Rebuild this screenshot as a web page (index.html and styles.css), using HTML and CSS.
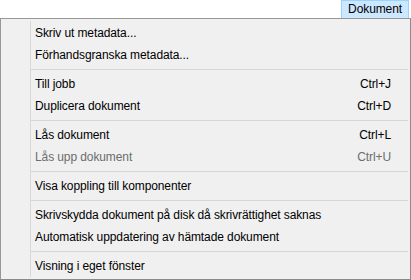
FILE: index.html
```html
<!DOCTYPE html>
<html lang="sv">
<head>
  <meta charset="UTF-8">
  <title>Dokument</title>
  <link rel="stylesheet" href="styles.css">
</head>
<body>
  <div class="menubar">
    <span class="menubar-item open">Dokument</span>
  </div>

  <!-- Dropdown -->
  <div class="menu">
    <div class="menu-item"><span class="label">Skriv ut metadata...</span></div>
    <div class="menu-item"><span class="label">Förhandsgranska metadata...</span></div>
    <div class="menu-sep"></div>
    <div class="menu-item"><span class="label">Till jobb</span><span class="key">Ctrl+J</span></div>
    <div class="menu-item"><span class="label">Duplicera dokument</span><span class="key">Ctrl+D</span></div>
    <div class="menu-sep"></div>
    <div class="menu-item"><span class="label">Lås dokument</span><span class="key">Ctrl+L</span></div>
    <div class="menu-item disabled"><span class="label">Lås upp dokument</span><span class="key">Ctrl+U</span></div>
    <div class="menu-sep"></div>
    <div class="menu-item"><span class="label">Visa koppling till komponenter</span></div>
    <div class="menu-sep"></div>
    <div class="menu-item"><span class="label">Skrivskydda dokument på disk då skrivrättighet saknas</span></div>
    <div class="menu-item"><span class="label">Automatisk uppdatering av hämtade dokument</span></div>
    <div class="menu-sep"></div>
    <div class="menu-item"><span class="label">Visning i eget fönster</span></div>
  </div>
</body>
</html>
```

FILE: styles.css
```css
body {
  margin: 0;
  padding: 0;
  background: #fff;
  font-family: "Liberation Sans", Arial, sans-serif;
  font-size: 12px;
  letter-spacing: -0.1px;
  color: #000;
  width: 411px;
  height: 280px;
  overflow: hidden;
}

.menubar {
  display: flex;
  justify-content: flex-end;
  height: 18px;
  padding-right: 2px;
}
.menubar-item {
  padding: 0 6px;
  line-height: 17px;
  border: 1px solid transparent;
  border-bottom: none;
}
.menubar-item.open {
  background: #cce8ff;
  border-color: #99d1ff;
}

.menu {
  position: relative;
  box-sizing: border-box;
  width: 411px;
  height: 262px;
  padding-top: 3px;
  border: 1px solid #979797;
  border-right-color: #8a8a8a;
  border-bottom-color: #8a8a8a;
  background: #f0f0f0;
  display: flex;
  flex-direction: column;
}
/* icon gutter line */
.menu::before {
  content: "";
  position: absolute;
  left: 29px;
  top: 2px;
  bottom: 2px;
  width: 1px;
  background: #d7d7d7;
}

.menu-item {
  display: flex;
  justify-content: space-between;
  align-items: center;
  height: 22px;
  padding: 0 19px 0 34px;
  white-space: nowrap;
}
.menu-item.disabled {
  color: #6d6d6d;
}

.menu-sep {
  position: relative;
  height: 7px;
  margin-left: 29px;
  margin-right: 2px;
}
.menu-sep::after {
  content: "";
  position: absolute;
  left: 0;
  right: 0;
  top: 3px;
  height: 1px;
  background: #d7d7d7;
}
```
